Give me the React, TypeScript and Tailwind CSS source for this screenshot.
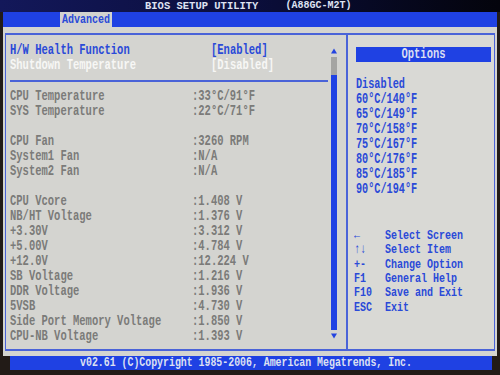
import React from "react";

const mono = "font-['Liberation_Mono','DejaVu_Sans_Mono',monospace] font-bold";

type Reading = { label: string; value: string } | null;

const readings: Reading[] = [
  { label: "CPU Temperature", value: ":33°C/91°F" },
  { label: "SYS Temperature", value: ":22°C/71°F" },
  null,
  { label: "CPU Fan", value: ":3260 RPM" },
  { label: "System1 Fan", value: ":N/A" },
  { label: "System2 Fan", value: ":N/A" },
  null,
  { label: "CPU Vcore", value: ":1.408 V" },
  { label: "NB/HT Voltage", value: ":1.376 V" },
  { label: "+3.30V", value: ":3.312 V" },
  { label: "+5.00V", value: ":4.784 V" },
  { label: "+12.0V", value: ":12.224 V" },
  { label: "SB Voltage", value: ":1.216 V" },
  { label: "DDR Voltage", value: ":1.936 V" },
  { label: "5VSB", value: ":4.730 V" },
  { label: "Side Port Memory Voltage", value: ":1.850 V" },
  { label: "CPU-NB Voltage", value: ":1.393 V" },
];

const options = [
  "Disabled",
  "60°C/140°F",
  "65°C/149°F",
  "70°C/158°F",
  "75°C/167°F",
  "80°C/176°F",
  "85°C/185°F",
  "90°C/194°F",
];

const help = [
  ["←", "Select Screen"],
  ["↑↓", "Select Item"],
  ["+-", "Change Option"],
  ["F1", "General Help"],
  ["F10", "Save and Exit"],
  ["ESC", "Exit"],
];

function SetupRow({
  label,
  value,
  labelW,
  color,
}: {
  label: string;
  value: string;
  labelW: string;
  color: string;
}) {
  return (
    <div className={`flex h-[15px] items-center whitespace-pre text-[10.5px] leading-none ${color}`}>
      <span className={`${labelW} scale-y-[1.35]`}>{label}</span>
      <span className="scale-y-[1.35]">{value}</span>
    </div>
  );
}

export default function App() {
  return (
    <div className={`flex h-[375px] w-[500px] flex-col overflow-hidden bg-[#221b17] ${mono}`}>
      {/* title */}
      <div className="flex h-[12px] items-center bg-linear-to-r from-[#13185a] via-[#0b0e3c] to-[#04040c] text-[10.5px] leading-none text-[#dfe2f2]">
        <span className="ml-[145px] scale-y-[1.1]">BIOS SETUP UTILITY</span>
        <span className="ml-[27px] scale-y-[1.1] text-[10px]">(A88GC-M2T)</span>
      </div>

      {/* tabs */}
      <div className="mx-[3px] flex h-[15px] bg-[#1f41e3]">
        <div className="ml-[57px] flex w-[52px] items-center justify-center bg-[#d3d3cf] text-[10px] leading-none text-[#2a4ad8]">
          <span className="scale-y-[1.35]">Advanced</span>
        </div>
      </div>

      {/* main */}
      <div className="mx-[3px] flex flex-1 flex-col bg-[#d4d4d0] px-[2px] pb-[5px] pt-[6px]">
        <div className="grid flex-1 grid-cols-[342px_1fr] border-x border-y-2 border-[#4a63d8]">
          {/* left */}
          <div className="flex border-r-2 border-[#4a63d8]">
            <div className="flex-1 pl-[4px] pt-[8px]">
              <SetupRow label="H/W Health Function" value="[Enabled]" labelW="w-[201px]" color="text-[#2a4ad8]" />
              <SetupRow label="Shutdown Temperature" value="[Disabled]" labelW="w-[201px]" color="text-[#f7f7f5]" />
              <div className="mr-[3px] mt-[7px] h-[2px] bg-[#4a63d8]" />
              <div className="pt-[7px]">
                {readings.map((r, i) =>
                  r ? (
                    <SetupRow key={i} label={r.label} value={r.value} labelW="w-[182px]" color="text-[#7b7b79]" />
                  ) : (
                    <div key={i} className="h-[15px]" />
                  ),
                )}
              </div>
            </div>
            {/* scrollbar */}
            <div className="mb-[10px] mr-[9px] mt-[13px] flex w-[6px] flex-col items-center">
              <svg width="6" height="6" viewBox="0 0 6 6" className="mb-[3px]">
                <path d="M3 0.5 L6 5.5 L0 5.5 Z" fill="#2343e0" />
              </svg>
              <div className="h-[18px] w-[6px] bg-[#a4a4a2]" />
              <div className="w-[6px] flex-1 bg-[#1f41e3]" />
              <svg width="6" height="6" viewBox="0 0 6 6" className="mt-[3px]">
                <path d="M0 0.5 L6 0.5 L3 5.5 Z" fill="#2343e0" />
              </svg>
            </div>
          </div>

          {/* right */}
          <div className="flex flex-col bg-[#d9d9d5] pl-[8px] pr-[3px] pt-[12px] text-[#2a4ad8]">
            <div className="flex h-[15px] items-center justify-center bg-[#1f41e3] text-[10.5px] leading-none text-[#d9ddf2]">
              <span className="scale-y-[1.35]">Options</span>
            </div>
            <div className="mt-[16px]">
              {options.map((o) => (
                <div key={o} className="flex h-[15px] items-center text-[10.2px] leading-none">
                  <span className="scale-y-[1.35]">{o}</span>
                </div>
              ))}
            </div>
            <div className="ml-[-2px] mt-[31px]">
              {help.map(([k, d]) => (
                <div key={k} className="flex h-[14.3px] items-center whitespace-pre text-[10px] leading-none">
                  <span className="w-[31px] scale-y-[1.35]">{k}</span>
                  <span className="scale-y-[1.35]">{d}</span>
                </div>
              ))}
            </div>
          </div>
        </div>
      </div>

      {/* footer */}
      <div className="ml-[10px] mr-[8px] flex h-[14px] items-center justify-center bg-[#1f41e3] text-[9.9px] leading-none text-[#dde0f2]">
        <span className="ml-[-10px] scale-y-[1.35] whitespace-pre">v02.61 (C)Copyright 1985-2006, American Megatrends, Inc.</span>
      </div>
      <div className="h-[5px]" />
    </div>
  );
}
